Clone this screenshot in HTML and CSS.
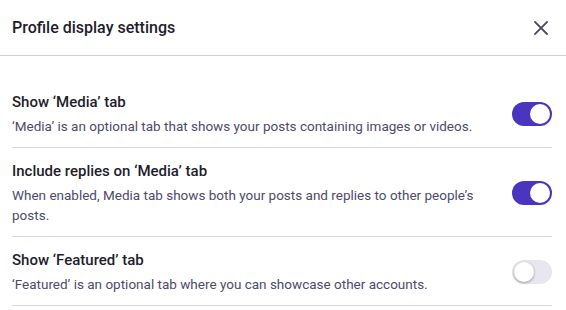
FILE: index.html
```html
<!DOCTYPE html>
<html>
<head>
<meta charset="utf-8">
<link rel="stylesheet" href="styles.css">
</head>
<body>
<div class="modal">
  <div class="header">
    <h1 class="title">Profile display settings</h1>
    <button class="close" aria-label="Close">
      <svg width="14" height="14" viewBox="0 0 14 14"><path d="M1 1L13 13M13 1L1 13" stroke="currentColor" stroke-width="1.8" stroke-linecap="square"/></svg>
    </button>
  </div>
  <div class="body">
    <div class="row">
      <div class="text">
        <div class="label">Show ‘Media’ tab</div>
        <div class="desc">‘Media’ is an optional tab that shows your posts containing images or videos.</div>
      </div>
      <span class="toggle on"><span class="knob"></span></span>
    </div>
    <div class="row">
      <div class="text">
        <div class="label">Include replies on ‘Media’ tab</div>
        <div class="desc">When enabled, Media tab shows both your posts and replies to other people’s posts.</div>
      </div>
      <span class="toggle on"><span class="knob"></span></span>
    </div>
    <div class="row">
      <div class="text">
        <div class="label">Show ‘Featured’ tab</div>
        <div class="desc">‘Featured’ is an optional tab where you can showcase other accounts.</div>
      </div>
      <span class="toggle"><span class="knob"></span></span>
    </div>
  </div>
</div>
</body>
</html>
```
FILE: styles.css
```css
* { box-sizing: border-box; }
html, body { margin: 0; padding: 0; background: #fff; }
body { font-family: Roboto, "Noto Sans", sans-serif; color: #1e1d2b; }
.modal { width: 566px; height: 310px; overflow: hidden; }
.header {
  height: 56px;
  display: flex;
  align-items: center;
  justify-content: space-between;
  padding: 0 12px;
  border-bottom: 1px solid #cfcdd9;
}
.title { margin: 0; font-size: 16px; font-weight: 500; color: #1e1d2b; }
.close {
  border: 0; background: none; padding: 0; margin-right: 6px;
  width: 14px; height: 14px; color: #4a4966; display: flex;
}
.body { padding: 23px 14px 0 12px; }
.row {
  display: flex;
  align-items: center;
  gap: 16px;
  padding: 12px 0 11px;
  border-bottom: 1px solid #d6d3e6;
}
.text { flex: 1; }
.label { font-size: 15px; font-weight: 500; line-height: 22px; color: #1e1d2b; }
.desc { font-size: 13.5px; line-height: 20px; margin-top: 3px; color: #4d4b6b; }
.toggle {
  flex: none;
  width: 40px; height: 24px; border-radius: 12px;
  background: #e8e7f0;
  display: flex; align-items: center; padding: 2px;
}
.toggle.on { background: #4a35c0; justify-content: flex-end; }
.knob {
  width: 20px; height: 20px; border-radius: 50%;
  background: #fff;
  box-shadow: 0 1px 3px rgba(0,0,0,0.35);
}
.toggle.on .knob { box-shadow: none; }
```
